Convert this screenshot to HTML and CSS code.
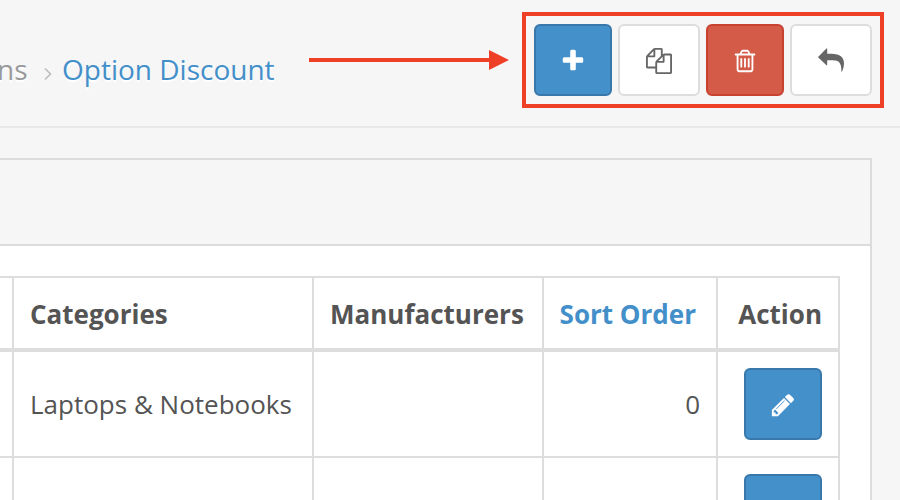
FILE: index.html
```html
<!DOCTYPE html>
<html lang="en">
<head>
<meta charset="utf-8">
<title>Option Discount</title>
<link rel="stylesheet" href="styles.css">
</head>
<body>
<svg class="sprite" aria-hidden="true">
  <symbol id="plus" viewBox="0 0 1792 1792"><path d="M1600 736v192q0 40-28 68t-68 28h-416v416q0 40-28 68t-68 28h-192q-40 0-68-28t-28-68v-416h-416q-40 0-68-28t-28-68v-192q0-40 28-68t68-28h416v-416q0-40 28-68t68-28h192q40 0 68 28t28 68v416h416q40 0 68 28t28 68z"/></symbol>
  <symbol id="copy" viewBox="0 0 1792 1792"><path d="M1696 384q40 0 68 28t28 68v1216q0 40-28 68t-68 28h-960q-40 0-68-28t-28-68v-288h-544q-40 0-68-28t-28-68v-672q0-40 20-88t48-76l408-408q28-28 76-48t88-20h416q40 0 68 28t28 68v328q68-40 128-40h416zm-544 213l-299 299h299v-299zm-640-384l-299 299h299v-299zm196 647l316-316v-416h-384v416q0 40-28 68t-68 28h-416v640h512v-256q0-40 20-88t48-76zm956 804v-1152h-384v416q0 40-28 68t-68 28h-416v640h896z"/></symbol>
  <symbol id="trash" viewBox="0 0 1792 1792"><path d="M704 736v576q0 14-9 23t-23 9h-64q-14 0-23-9t-9-23v-576q0-14 9-23t23-9h64q14 0 23 9t9 23zm256 0v576q0 14-9 23t-23 9h-64q-14 0-23-9t-9-23v-576q0-14 9-23t23-9h64q14 0 23 9t9 23zm256 0v576q0 14-9 23t-23 9h-64q-14 0-23-9t-9-23v-576q0-14 9-23t23-9h64q14 0 23 9t9 23zm128 724v-948h-896v948q0 22 7 40.500t14.500 27 10.500 8.500h832q3 0 10.500-8.500t14.500-27 7-40.500zm-672-1076h448l-48-117q-7-9-17-11h-317q-10 2-17 11zm928 32v64q0 14-9 23t-23 9h-96v948q0 83-47 143.500t-113 60.500h-832q-66 0-113-58.500t-47-141.500v-952h-96q-14 0-23-9t-9-23v-64q0-14 9-23t23-9h309l70-167q15-37 54-63t79-26h320q40 0 79 26t54 63l70 167h309q14 0 23 9t9 23z"/></symbol>
  <symbol id="reply" viewBox="0 0 26 26"><path d="M.3 8.700 8.200.7q1-.9 1 .4v4.600h4.300C22 5.700 26 9.500 26 15.200c0 3.200-.9 6-2 8.400q-.5.900-.6-.1C23.500 15.500 21.500 12.300 14.500 12.300H9.200v4.400q0 1.300-1 .4L.3 9.500q-.4-.4 0-.8z"/></symbol>
  <symbol id="pencil" viewBox="0 0 1792 1792"><path d="M491 1536l91-91-235-235-91 91v107h128v128h107zm523-928q0-22-22-22-10 0-17 7l-542 542q-7 7-7 17 0 22 22 22 10 0 17-7l542-542q7-7 7-17zm-54-192l416 416-832 832h-416v-416zm683 96q0 53-37 90l-166 166-416-416 166-165q36-38 90-38 53 0 91 38l235 234q37 39 37 91z"/></symbol>
</svg>

<header class="page-header">
  <nav class="breadcrumb">
    <span class="crumb">ns</span>
    <svg class="chevron" viewBox="0 0 8 14"><path d="M1 1.500 6.500 7 1 12.500"/></svg>
    <a class="crumb-current">Option Discount</a>
  </nav>
  <svg class="arrow" viewBox="0 0 200 20"><path d="M0 8h180V0l20 10-20 10v-8H0z"/></svg>
  <div class="toolbar">
    <button class="btn primary" aria-label="Add"><svg class="icon"><use href="#plus"/></svg></button>
    <button class="btn default" aria-label="Copy"><svg class="icon"><use href="#copy"/></svg></button>
    <button class="btn danger" aria-label="Delete"><svg class="icon"><use href="#trash"/></svg></button>
    <button class="btn default" aria-label="Back"><svg class="icon"><use href="#reply"/></svg></button>
  </div>
</header>

<main class="panel">
  <div class="panel-heading"></div>
  <div class="panel-body">
    <div class="table">
      <div class="row head">
        <div class="cell"></div>
        <div class="cell">Categories</div>
        <div class="cell">Manufacturers</div>
        <div class="cell right sort">Sort Order</div>
        <div class="cell right">Action</div>
      </div>
      <div class="row">
        <div class="cell"></div>
        <div class="cell">Laptops &amp; Notebooks</div>
        <div class="cell"></div>
        <div class="cell right">0</div>
        <div class="cell right"><button class="btn primary" aria-label="Edit"><svg class="icon"><use href="#pencil"/></svg></button></div>
      </div>
      <div class="row">
        <div class="cell"></div>
        <div class="cell"></div>
        <div class="cell"></div>
        <div class="cell"></div>
        <div class="cell right"><button class="btn primary" aria-label="Edit"><svg class="icon"><use href="#pencil"/></svg></button></div>
      </div>
    </div>
  </div>
</main>
</body>
</html>
```
FILE: styles.css
```css
* { box-sizing: border-box; }

body {
  display: flex;
  flex-direction: column;
  margin: 0;
  height: 500px;
  overflow: hidden;
  background: #f6f6f6;
  color: #545454;
  font: 26px/36px "Open Sans", sans-serif;
}

.sprite { display: none; }

.page-header {
  display: flex;
  flex: none;
  align-items: flex-start;
  height: 128px;
  padding: 12px 16px 0 0;
  border-bottom: 2px solid #e8e8e8;
}

.breadcrumb {
  display: flex;
  align-items: center;
  width: 309px;
  height: 40px;
  margin-top: 37px;
  font-size: 28px;
  text-shadow: 0 2px #fff;
  white-space: nowrap;
}

.crumb { width: 44px; margin-left: -3px; color: #999; }
.chevron {
  width: 8px;
  height: 14px;
  margin: 9px 10px 0 3px;
  fill: none;
  stroke: #bbb;
  stroke-width: 1.6;
}
.crumb-current { color: #438fca; }

.arrow { width: 200px; height: 20px; margin-top: 38px; fill: #ee4027; }

.toolbar {
  display: flex;
  gap: 6px;
  margin-left: auto;
  padding: 8px;
  border: 4px solid #ee4027;
}

.btn {
  display: flex;
  align-items: flex-start;
  justify-content: center;
  width: 78px;
  height: 72px;
  padding: 22px 0 0;
  border: 2px solid;
  border-radius: 6px;
}
.primary { background: #4490cb; border-color: #3978ab; color: #fff; }
.default { width: 82px; background: #fff; border-color: #ddd; color: #666; }
.danger { background: #d45b48; border-color: #c84230; color: #fff; }
.icon { width: 26px; height: 26px; fill: currentColor; }

.panel {
  flex: 1;
  width: 872px;
  min-height: 0;
  margin-top: 30px;
  overflow: hidden;
  border: solid #dcdcdc;
  border-width: 2px 2px 0 0;
  background: #fff;
}
.panel-heading { height: 86px; background: #f6f6f6; border-bottom: 2px solid #dcdcdc; }
.panel-body { padding: 30px 30px 0 0; }

.table { border-top: 2px solid #ddd; }
.row {
  display: grid;
  grid-template-columns: 14px 300px 230px 174px 122px;
  height: 106px;
  border-bottom: 2px solid #ddd;
}
.head { height: 74px; border-bottom-width: 4px; font-weight: 700; }
.cell {
  display: flex;
  align-items: center;
  padding: 0 16px;
  border-right: 2px solid #ddd;
  white-space: nowrap;
}
.head .cell { padding-top: 2px; }
.cell:first-child { padding: 0; }
.right { justify-content: flex-end; }
.head .sort { padding-right: 20px; color: #438fca; }
```
